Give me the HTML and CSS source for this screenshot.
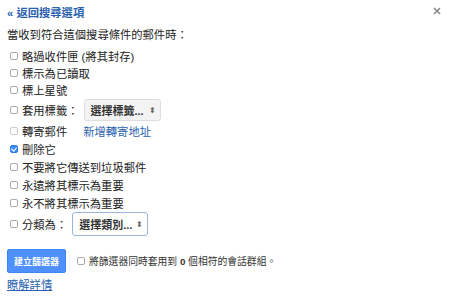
FILE: index.html
```html
<!DOCTYPE html>
<html lang="zh-TW">

<head>
    <meta charset="UTF-8">
    <meta name="viewport" content="width=device-width, initial-scale=1.0">
    <link rel="stylesheet" href="styles.css">
    <title>篩選器</title>
</head>

<body>
    <div class="dialog">
        <a class="back" href="#">« 返回搜尋選項</a>
        <span class="close">
            <svg width="8" height="8" viewBox="0 0 8 8">
                <path d="M1 1L7 7M7 1L1 7" stroke="#888" stroke-width="1.6" />
            </svg>
        </span>
        <p class="intro">當收到符合這個搜尋條件的郵件時：</p>

        <ul class="actions">
            <li><span class="cb"></span>略過收件匣 (將其封存)</li>
            <li><span class="cb"></span>標示為已讀取</li>
            <li><span class="cb"></span>標上星號</li>
            <li class="tall">
                <span class="cb"></span>套用標籤：
                <div class="select gray">選擇標籤...<span class="arrows">⬍</span></div>
            </li>
            <li class="wide">
                <span class="cb off"></span>轉寄郵件
                <a class="add" href="#">新增轉寄地址</a>
            </li>
            <li class="wide"><span class="cb on"></span>刪除它</li>
            <li class="wide"><span class="cb"></span>不要將它傳送到垃圾郵件</li>
            <li class="wide"><span class="cb"></span>永遠將其標示為重要</li>
            <li class="wide"><span class="cb"></span>永不將其標示為重要</li>
            <li class="tall">
                <span class="cb"></span>分類為：
                <div class="select focus">選擇類別...<span class="arrows">⬍</span></div>
            </li>
        </ul>

        <div class="footer">
            <button class="create">建立篩選器</button>
            <span class="cb"></span>
            <span class="apply">將篩選器同時套用到 <b>0</b> 個相符的會話群組。</span>
        </div>

        <a class="learn" href="#">瞭解詳情</a>
    </div>
</body>

</html>
```

FILE: styles.css
```css
* {
    margin: 0;
    padding: 0;
    box-sizing: border-box;
}

body {
    background: #fff;
    font-family: "Liberation Sans", "Noto Sans CJK TC", sans-serif;
    font-size: 11.3px;
    color: #222;
}

.dialog {
    position: relative;
    width: 449px;
    height: 301px;
    padding: 5px 7px 0;
}

.back {
    display: block;
    line-height: 16px;
    font-weight: bold;
    color: #2a5fb0;
    text-decoration: none;
}

.close {
    position: absolute;
    right: 8px;
    top: 5px;
}

.intro {
    margin-top: 6px;
    line-height: 16px;
}

.actions {
    list-style: none;
    margin-top: 4px;
}

.actions li {
    display: flex;
    align-items: center;
    height: 17px;
}

.actions li.wide {
    height: 18px;
}

.actions li.tall {
    height: 24px;
}

.cb {
    display: inline-block;
    width: 8px;
    height: 8px;
    margin: 0 4px 0 3px;
    border: 1px solid #aaa;
    border-radius: 2px;
    background: #fff;
    flex-shrink: 0;
}

.cb.off {
    border-color: #ccc;
}

.cb.on {
    position: relative;
    border-color: #2f7de1;
    background: #3a8ef6;
}

.cb.on::after {
    content: "";
    position: absolute;
    left: 1px;
    top: 0;
    width: 3px;
    height: 4px;
    border: solid #fff;
    border-width: 0 1.5px 1.5px 0;
    transform: rotate(40deg);
}

.select {
    display: flex;
    align-items: center;
    justify-content: space-between;
    height: 22px;
    margin-left: 5px;
    padding: 0 4px 0 6px;
    border: 1px solid #ddd;
    border-radius: 3px;
    font-size: 11px;
    font-weight: bold;
    color: #333;
}

.select.gray {
    width: 77px;
    background: #f3f3f3;
}

.select.focus {
    width: 76px;
    height: 24px;
    background: #fff;
    border-color: #9ab6df;
}

.arrows {
    font-size: 8px;
    font-weight: normal;
    color: #666;
}

.add {
    margin-left: 16px;
    color: #2a5fb0;
    text-decoration: none;
}

.footer {
    display: flex;
    align-items: center;
    margin-top: 13px;
}

.create {
    width: 59px;
    height: 24px;
    margin-right: 8px;
    border: 1px solid #3f86f5;
    border-radius: 2px;
    background: #4d90fe;
    color: #fff;
    font-family: inherit;
    font-size: 9px;
    font-weight: bold;
}

.apply {
    font-size: 9.8px;
    color: #333;
}

.learn {
    display: block;
    margin-top: 4px;
    line-height: 16px;
    color: #2a5fb0;
    text-decoration: underline;
}
```
